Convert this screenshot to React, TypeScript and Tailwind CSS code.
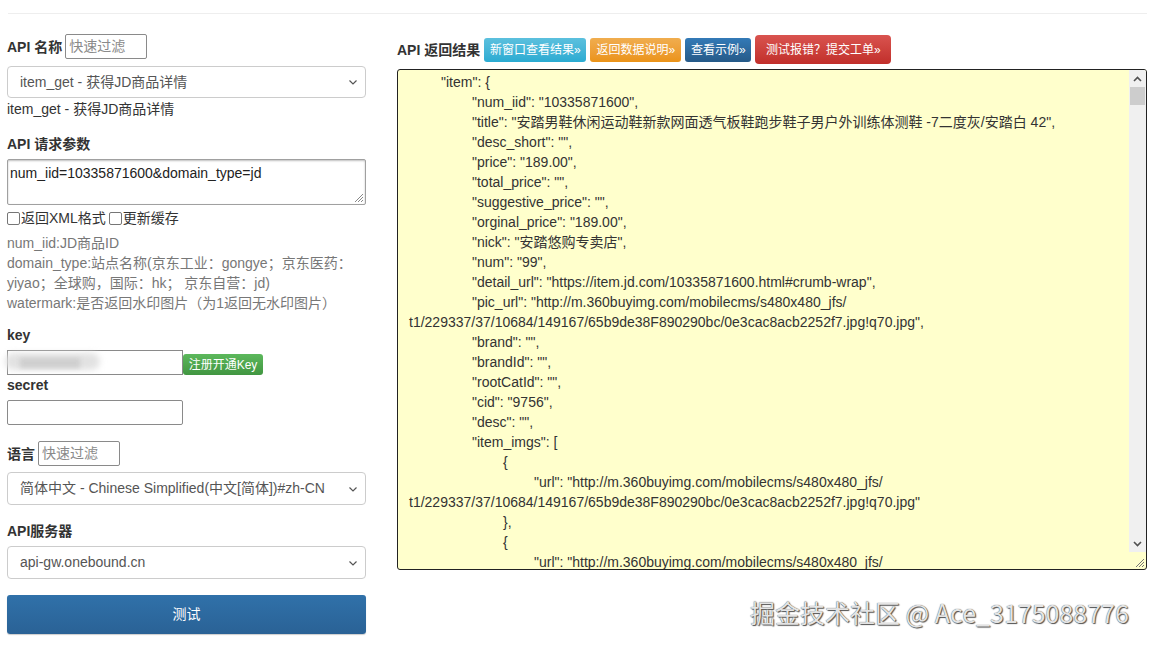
import React from "react";

const FONT = { fontFamily: '"Liberation Sans", Arial, "Noto Sans CJK SC", sans-serif' };

type Line = { level: number; text: string };

const JSON_LINES: Line[] = [
  { level: 1, text: '"item": {' },
  { level: 2, text: '"num_iid": "10335871600",' },
  { level: 2, text: '"title": "安踏男鞋休闲运动鞋新款网面透气板鞋跑步鞋子男户外训练体测鞋 -7二度灰/安踏白 42",' },
  { level: 2, text: '"desc_short": "",' },
  { level: 2, text: '"price": "189.00",' },
  { level: 2, text: '"total_price": "",' },
  { level: 2, text: '"suggestive_price": "",' },
  { level: 2, text: '"orginal_price": "189.00",' },
  { level: 2, text: '"nick": "安踏悠购专卖店",' },
  { level: 2, text: '"num": "99",' },
  { level: 2, text: '"detail_url": "https://item.jd.com/10335871600.html#crumb-wrap",' },
  { level: 2, text: '"pic_url": "http://m.360buyimg.com/mobilecms/s480x480_jfs/' },
  { level: 0, text: 't1/229337/37/10684/149167/65b9de38F890290bc/0e3cac8acb2252f7.jpg!q70.jpg",' },
  { level: 2, text: '"brand": "",' },
  { level: 2, text: '"brandId": "",' },
  { level: 2, text: '"rootCatId": "",' },
  { level: 2, text: '"cid": "9756",' },
  { level: 2, text: '"desc": "",' },
  { level: 2, text: '"item_imgs": [' },
  { level: 3, text: "{" },
  { level: 4, text: '"url": "http://m.360buyimg.com/mobilecms/s480x480_jfs/' },
  { level: 0, text: 't1/229337/37/10684/149167/65b9de38F890290bc/0e3cac8acb2252f7.jpg!q70.jpg"' },
  { level: 3, text: "}," },
  { level: 3, text: "{" },
  { level: 4, text: '"url": "http://m.360buyimg.com/mobilecms/s480x480_jfs/' },
];

const INDENT = ["pl-0", "pl-[32px]", "pl-[63px]", "pl-[94px]", "pl-[125px]"];

function Chevron() {
  return (
    <svg width="10" height="10" viewBox="0 0 10 10" className="shrink-0">
      <path d="M1.5 3.5 L5 7 L8.5 3.5" fill="none" stroke="#555" strokeWidth="1.2" />
    </svg>
  );
}

function Grip({ color = "#888" }: { color?: string }) {
  return (
    <svg width="12" height="12" viewBox="0 0 12 12">
      <path d="M11 3 L3 11 M11 6 L6 11 M11 9 L9 11" stroke={color} strokeWidth="1" />
    </svg>
  );
}

function Select({ value, h }: { value: string; h: string }) {
  return (
    <div
      className={`flex ${h} w-[359px] items-center justify-between rounded-[4px] border border-[#cccccc] bg-white pl-[12px] pr-[7px] text-[14px] text-[#555]`}
    >
      <span>{value}</span>
      <Chevron />
    </div>
  );
}

function Filter({ w }: { w: string }) {
  return (
    <div
      className={`flex h-[25px] ${w} items-center rounded-[2px] border border-[#8a8a8a] bg-white px-[3px] text-[14px] text-[#8a8a8a]`}
    >
      快速过滤
    </div>
  );
}

function Check({ label }: { label: string }) {
  return (
    <span className="flex items-center">
      <span className="mr-[1px] inline-block h-[13px] w-[13px] rounded-[2px] border border-[#767676] bg-white" />
      {label}
    </span>
  );
}

function Label({ children, className = "" }: { children: React.ReactNode; className?: string }) {
  return <div className={`text-[14px] font-bold leading-[20px] text-[#333] ${className}`}>{children}</div>;
}

export default function App() {
  return (
    <div className="relative h-[646px] w-[1151px] overflow-hidden bg-white" style={FONT}>
      <div className="ml-[8px] mt-[13px] h-px w-[1139px] bg-[#eeeeee]" />

      <div className="flex pl-[7px]">
        {/* left column */}
        <div className="flex w-[359px] flex-col">
          <div className="mt-[20px] flex items-center gap-[3px]">
            <Label>API 名称</Label>
            <Filter w="w-[82px]" />
          </div>
          <div className="mt-[7px]">
            <Select value="item_get - 获得JD商品详情" h="h-[32px]" />
          </div>
          <div className="mt-px text-[14px] leading-[20px] text-[#333]">item_get - 获得JD商品详情</div>

          <Label className="mt-[15px]">API 请求参数</Label>
          <div className="relative mt-[5px] h-[46px] w-[359px] rounded-[2px] border border-[#a0a0a0] bg-white px-[2px] pt-[3px] text-[14px] leading-[20px] text-[#222] shadow-[inset_0_1px_2px_rgba(0,0,0,0.25)]">
            num_iid=10335871600&amp;domain_type=jd
            <div className="absolute bottom-[1px] right-[1px]">
              <Grip />
            </div>
          </div>
          <div className="mt-[3px] flex h-[20px] items-center gap-[3px] text-[14px] text-[#333]">
            <Check label="返回XML格式" />
            <Check label="更新缓存" />
          </div>
          <div className="mt-[5px] text-[14px] leading-[20px] text-[#777]">
            <div>num_iid:JD商品ID</div>
            <div>domain_type:站点名称(京东工业：gongye；京东医药：</div>
            <div>yiyao；全球购，国际：hk； 京东自营：jd)</div>
            <div>watermark:是否返回水印图片（为1返回无水印图片）</div>
          </div>

          <Label className="mt-[12px]">key</Label>
          <div className="mt-[5px] flex items-end">
            <div className="relative h-[25px] w-[176px] border border-[#8a8a8a] bg-white">
              <div className="absolute left-[-3px] top-[2px] h-[17px] w-[95px] rounded-full bg-[#e2e2e2] blur-[3px]" />
              <div className="absolute left-[12px] top-[7px] h-[10px] w-[60px] bg-[#cfcfcf] blur-[2px]" />
            </div>
            <div className="flex h-[21px] w-[80px] items-center justify-center rounded-[3px] bg-gradient-to-b from-[#5cb85c] to-[#419641] text-[12px] text-white">
              注册开通Key
            </div>
          </div>
          <Label>secret</Label>
          <div className="mt-[5px] h-[25px] w-[176px] rounded-[2px] border border-[#8a8a8a] bg-white" />

          <div className="mt-[16px] flex items-center gap-[3px]">
            <Label>语言</Label>
            <Filter w="w-[82px]" />
          </div>
          <div className="mt-[6px]">
            <Select value="简体中文 - Chinese Simplified(中文[简体])#zh-CN" h="h-[33px]" />
          </div>

          <Label className="mt-[16px]">API服务器</Label>
          <div className="mt-[5px]">
            <Select value="api-gw.onebound.cn" h="h-[33px]" />
          </div>

          <div className="mt-[16px] flex h-[39px] w-[359px] items-center justify-center rounded-[3px] bg-gradient-to-b from-[#3071a9] to-[#2a6296] text-[14px] text-white shadow-[0_1px_1px_rgba(0,0,0,0.2)]">
            测试
          </div>
        </div>

        {/* right column */}
        <div className="ml-[31px] flex w-[750px] flex-col">
          <div className="mt-[21px] flex h-[29px] items-center">
            <Label>API 返回结果</Label>
            <div className="ml-[4px] flex items-center gap-[4px] text-[12px] text-white">
              <span className="flex h-[24px] w-[102px] items-center justify-center rounded-[3px] bg-gradient-to-b from-[#5bc0de] to-[#2aabd2]">
                新窗口查看结果»
              </span>
              <span className="flex h-[24px] w-[91px] items-center justify-center rounded-[3px] bg-gradient-to-b from-[#f0ad4e] to-[#eb9316]">
                返回数据说明»
              </span>
              <span className="flex h-[24px] w-[66px] items-center justify-center rounded-[3px] bg-gradient-to-b from-[#337ab7] to-[#265a88]">
                查看示例»
              </span>
              <span className="flex h-[29px] w-[136px] items-center justify-center rounded-[4px] bg-gradient-to-b from-[#d9534f] to-[#c12e2a]">
                测试报错？提交工单»
              </span>
            </div>
          </div>

          <div className="mt-[5px] flex h-[501px] w-[750px] overflow-hidden rounded-[3px] border border-[#222] bg-[#ffffcc]">
            <div className="flex-1 overflow-hidden pl-[11px] pt-[2px] text-[14px] leading-[20px] text-[#333]">
              {JSON_LINES.map((l, i) => (
                <div key={i} className={`whitespace-pre ${INDENT[l.level]}`}>
                  {l.text}
                </div>
              ))}
            </div>
            <div className="flex w-[17px] flex-col">
              <div className="flex flex-1 flex-col bg-[#f0f0f0]">
                <div className="flex h-[17px] items-center justify-center">
                  <svg width="9" height="6" viewBox="0 0 9 6">
                    <path d="M1 5 L4.5 1.5 L8 5" fill="none" stroke="#505050" strokeWidth="1.6" />
                  </svg>
                </div>
                <div className="mx-[1px] h-[18px] bg-[#cdcdcd]" />
                <div className="flex-1" />
                <div className="flex h-[17px] items-center justify-center">
                  <svg width="9" height="6" viewBox="0 0 9 6">
                    <path d="M1 1 L4.5 4.5 L8 1" fill="none" stroke="#505050" strokeWidth="1.6" />
                  </svg>
                </div>
              </div>
              <div className="flex h-[17px] items-end justify-end pb-[1px] pr-[1px]">
                <Grip color="#777" />
              </div>
            </div>
          </div>
        </div>
      </div>

      <div
        className="absolute left-[750px] top-[596px] whitespace-nowrap text-[25px] leading-[32px] text-[#e4e4e4] [text-shadow:0_0_1px_#333,1px_1px_1px_#555]"
        style={{ fontFamily: '"Noto Sans CJK SC", "Noto Sans", sans-serif' }}
      >
        掘金技术社区 @ Ace_3175088776
      </div>
    </div>
  );
}
